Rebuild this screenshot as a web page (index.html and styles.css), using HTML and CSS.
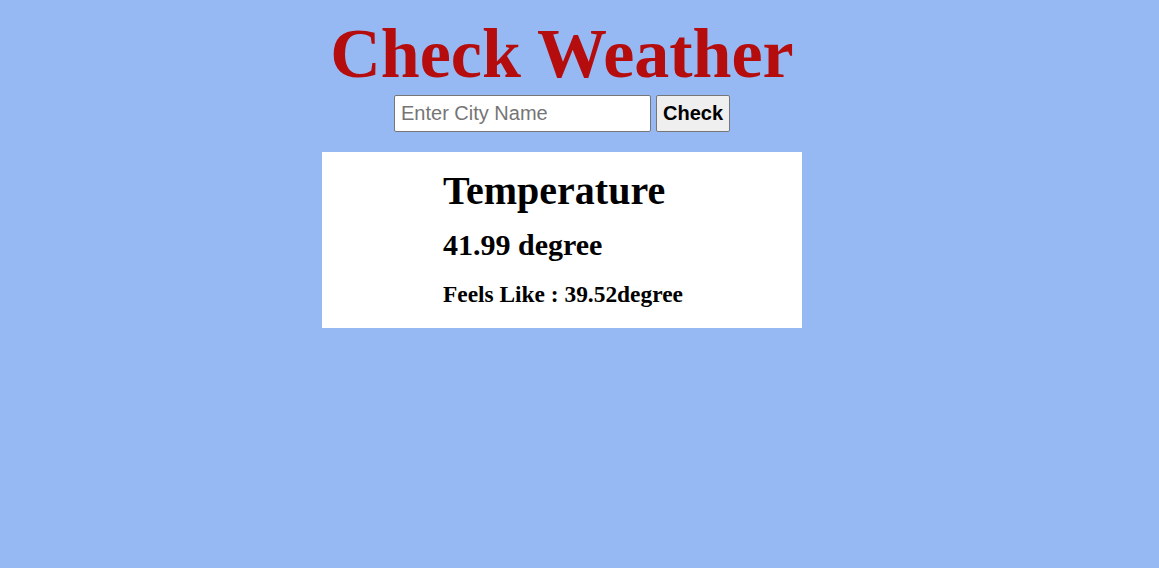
FILE: index.html
```html
<!DOCTYPE html>
<html>
<head>
<meta charset="utf-8">
<link rel="stylesheet" href="styles.css">
</head>
<body>
<div class="page">
  <h1 class="title">Check Weather</h1>
  <form class="search">
    <input class="city" type="text" placeholder="Enter City Name">
    <button class="check" type="button">Check</button>
  </form>
  <div class="card">
    <div class="info">
      <h2 class="temp-label">Temperature</h2>
      <h3 class="temp">41.99 degree</h3>
      <h4 class="feels">Feels Like : 39.52degree</h4>
    </div>
  </div>
</div>
</body>
</html>
```
FILE: styles.css
```css
html, body {
  margin: 0;
  padding: 0;
  background: #96b9f4;
}
body {
  font-family: "Liberation Serif", "Times New Roman", serif;
}
.page {
  display: flex;
  flex-direction: column;
  align-items: center;
  padding-right: 35px;
}
.title {
  margin: 14px 0 1px 0;
  font-size: 70px;
  line-height: 80px;
  font-weight: bold;
  color: #b50d0d;
}
.search {
  display: flex;
  gap: 5px;
  margin: 0;
}
.city {
  box-sizing: border-box;
  width: 257px;
  height: 37px;
  padding: 0 6px;
  font-family: "Liberation Sans", Arial, sans-serif;
  font-size: 20px;
  border: 1px solid #767676;
  border-radius: 2px;
  background: #fff;
}
.city::placeholder {
  color: #757575;
}
.check {
  box-sizing: border-box;
  width: 74px;
  height: 37px;
  font-family: "Liberation Sans", Arial, sans-serif;
  font-size: 20px;
  font-weight: bold;
  color: #000;
  background: #efefef;
  border: 1px solid #767676;
  border-radius: 2px;
  padding: 0;
}
.card {
  box-sizing: border-box;
  width: 480px;
  height: 176px;
  margin-top: 20px;
  background: #fff;
  padding: 16px 0 0 121px;
}
.info {
  font-weight: bold;
  color: #000;
}
.temp-label {
  font-size: 40px;
  line-height: 46px;
  margin: 0;
}
.temp {
  font-size: 30px;
  line-height: 34px;
  margin: 14px 0 0 0;
}
.feels {
  font-size: 23.4px;
  line-height: 27px;
  margin: 19px 0 0 0;
}
```
